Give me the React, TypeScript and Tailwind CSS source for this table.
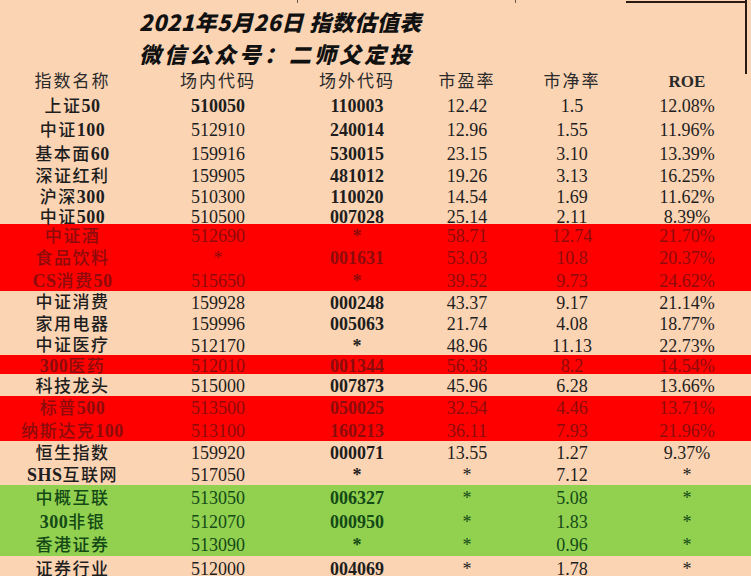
import React from "react";

type Tone = "p" | "r" | "g";
type Row = {
  name: string;
  code: string;
  codeBold?: boolean;
  out: string;
  pe: string;
  pb: string;
  roe: string;
  h: string;
  tone: Tone;
};

const rows: Row[] = [
  { name: "上证50", code: "510050", codeBold: true, out: "110003", pe: "12.42", pb: "1.5", roe: "12.08%", h: "h-[24px]", tone: "p" },
  { name: "中证100", code: "512910", out: "240014", pe: "12.96", pb: "1.55", roe: "11.96%", h: "h-[24px]", tone: "p" },
  { name: "基本面60", code: "159916", out: "530015", pe: "23.15", pb: "3.10", roe: "13.39%", h: "h-[23px]", tone: "p" },
  { name: "深证红利", code: "159905", out: "481012", pe: "19.26", pb: "3.13", roe: "16.25%", h: "h-[22px]", tone: "p" },
  { name: "沪深300", code: "510300", out: "110020", pe: "14.54", pb: "1.69", roe: "11.62%", h: "h-[20px]", tone: "p" },
  { name: "中证500", code: "510500", out: "007028", pe: "25.14", pb: "2.11", roe: "8.39%", h: "h-[18px]", tone: "p" },
  { name: "中证酒", code: "512690", out: "*", pe: "58.71", pb: "12.74", roe: "21.70%", h: "h-[22px]", tone: "r" },
  { name: "食品饮料", code: "*", out: "001631", pe: "53.03", pb: "10.8", roe: "20.37%", h: "h-[22px]", tone: "r" },
  { name: "CS消费50", code: "515650", out: "*", pe: "39.52", pb: "9.73", roe: "24.62%", h: "h-[23px]", tone: "r" },
  { name: "中证消费", code: "159928", out: "000248", pe: "43.37", pb: "9.17", roe: "21.14%", h: "h-[21px]", tone: "p" },
  { name: "家用电器", code: "159996", out: "005063", pe: "21.74", pb: "4.08", roe: "18.77%", h: "h-[22px]", tone: "p" },
  { name: "中证医疗", code: "512170", out: "*", pe: "48.96", pb: "11.13", roe: "22.73%", h: "h-[21px]", tone: "p" },
  { name: "300医药", code: "512010", out: "001344", pe: "56.38", pb: "8.2", roe: "14.54%", h: "h-[19px]", tone: "r" },
  { name: "科技龙头", code: "515000", out: "007873", pe: "45.96", pb: "6.28", roe: "13.66%", h: "h-[22px]", tone: "p" },
  { name: "标普500", code: "513500", out: "050025", pe: "32.54", pb: "4.46", roe: "13.71%", h: "h-[22px]", tone: "r" },
  { name: "纳斯达克100", code: "513100", out: "160213", pe: "36.11", pb: "7.93", roe: "21.96%", h: "h-[23px]", tone: "r" },
  { name: "恒生指数", code: "159920", out: "000071", pe: "13.55", pb: "1.27", roe: "9.37%", h: "h-[22px]", tone: "p" },
  { name: "SHS互联网", code: "517050", out: "*", pe: "*", pb: "7.12", roe: "*", h: "h-[22px]", tone: "p" },
  { name: "中概互联", code: "513050", out: "006327", pe: "*", pb: "5.08", roe: "*", h: "h-[24px]", tone: "g" },
  { name: "300非银", code: "512070", out: "000950", pe: "*", pb: "1.83", roe: "*", h: "h-[23px]", tone: "g" },
  { name: "香港证券", code: "513090", out: "*", pe: "*", pb: "0.96", roe: "*", h: "h-[24px]", tone: "g" },
  { name: "证券行业", code: "512000", out: "004069", pe: "*", pb: "1.78", roe: "*", h: "h-[24px]", tone: "p" },
];

const toneCls: Record<Tone, string> = {
  p: "bg-[#fbd4b4] text-[#1e1e1e]",
  r: "bg-[#fe0000] text-[#8e0b0b]",
  g: "bg-[#92d050] text-[#144a16]",
};

const grid =
  "grid grid-cols-[145px_146px_132px_88px_122px_108px_1fr] items-center text-center";

function Name({ text }: { text: string }) {
  const parts = text.match(/[A-Za-z0-9]+|[^A-Za-z0-9]+/g) || [];
  return (
    <div className="text-[17px] tracking-[1.5px] whitespace-nowrap">
      {parts.map((p, i) =>
        /[A-Za-z0-9]/.test(p) ? (
          <span key={i} className="font-bold text-[18px] tracking-[0.5px]">
            {p}
          </span>
        ) : (
          <span key={i} className="font-medium">
            {p}
          </span>
        )
      )}
    </div>
  );
}

export default function App() {
  return (
    <div
      className="relative w-[751px] h-[576px] overflow-hidden bg-[#fbd4b4] text-[18px] leading-none"
      style={{ fontFamily: "'Liberation Serif', 'Noto Sans CJK SC', serif" }}
    >
      {/* cropped frame remnants */}
      <div className="absolute top-[1px] left-[626px] w-[120px] h-[2px] bg-[#2a1a14]" />
      <div className="absolute top-0 left-[745px] w-[2px] h-[74px] bg-[#2a1a14]" />
      <div className="absolute top-0 left-[297px] w-[1px] h-[3px] bg-[#6b5545]" />
      <div className="absolute top-0 left-[515px] w-[1px] h-[3px] bg-[#6b5545]" />

      <div
        className="h-[70px] pl-[139px] pt-[6px] flex flex-col gap-[2px] text-[#111] font-black italic"
        style={{ fontFamily: "'Noto Sans CJK SC', sans-serif" }}
      >
        <div className="leading-[30px] text-[22px] tracking-[0.5px]">
          2021年5月26日 指数估值表
        </div>
        <div className="leading-[30px] text-[22px] tracking-[3px]">
          微信公众号：二师父定投
        </div>
      </div>

      <div className={`${grid} h-[23px] text-[#2a2a2a] text-[17px]`}>
        <div className="tracking-[2px]">指数名称</div>
        <div className="tracking-[2px]">场内代码</div>
        <div className="tracking-[2px]">场外代码</div>
        <div className="tracking-[2px]">市盈率</div>
        <div className="tracking-[2px]">市净率</div>
        <div className="font-bold">ROE</div>
        <div />
      </div>

      {rows.map((r) => (
        <div key={r.name} className={`${grid} ${r.h} ${toneCls[r.tone]} pt-[2px]`}>
          <Name text={r.name} />
          <div className={r.codeBold ? "font-bold" : ""}>{r.code}</div>
          <div className="font-bold">{r.out}</div>
          <div>{r.pe}</div>
          <div>{r.pb}</div>
          <div>{r.roe}</div>
          <div />
        </div>
      ))}
    </div>
  );
}
